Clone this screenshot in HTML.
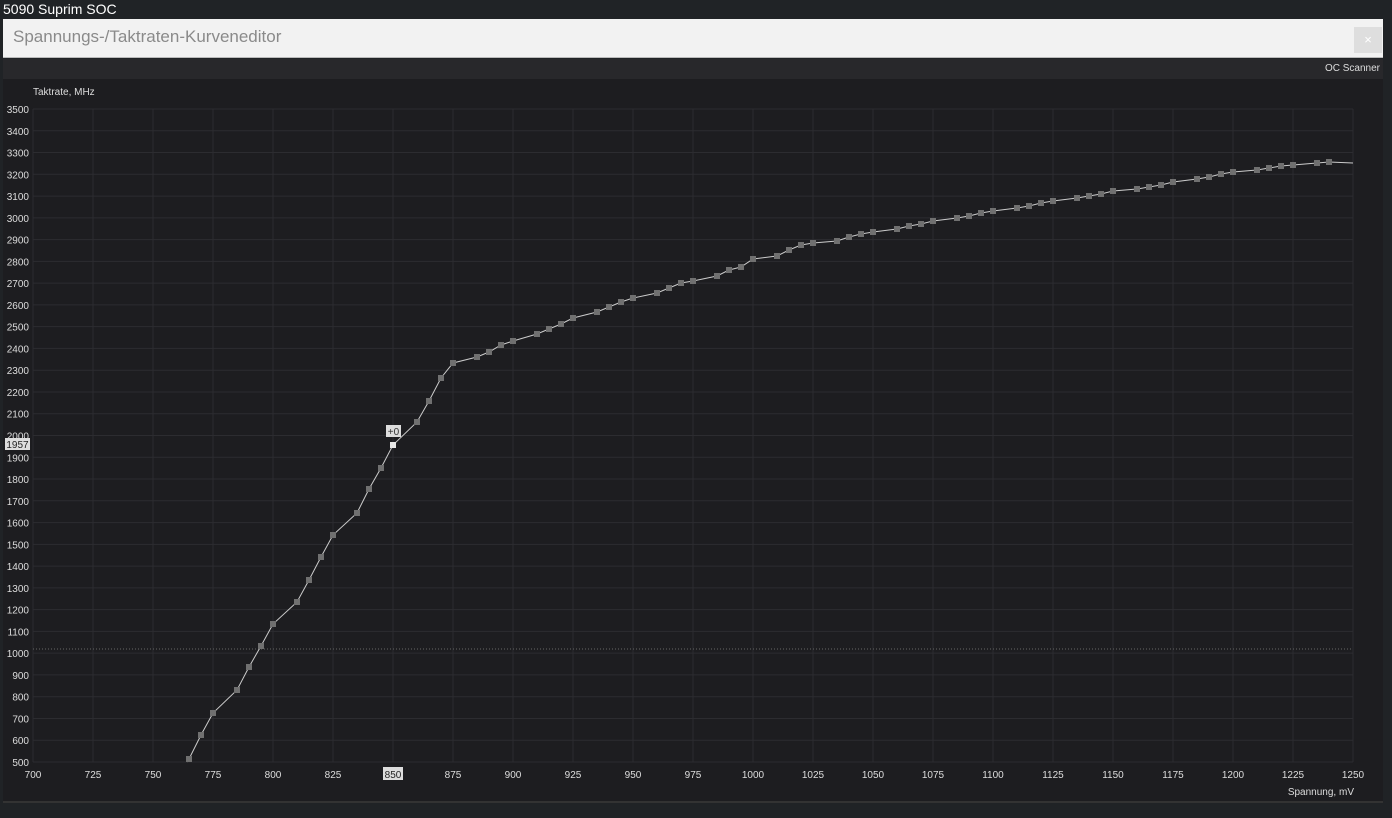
<!DOCTYPE html>
<html><head><meta charset="utf-8"><style>
html,body{margin:0;padding:0;width:1392px;height:818px;overflow:hidden;background:#202326;font-family:"Liberation Sans",sans-serif}
#top{position:absolute;left:3px;top:0;color:#fff;font-size:14px;line-height:19px}
#title{position:absolute;left:3px;top:19px;width:1380px;height:38px;background:#f2f2f2;border-bottom:1px solid #bbb}
#title span{position:absolute;left:10px;top:8px;font-size:17px;color:#8a8a8a}
#close{position:absolute;right:1px;top:8px;width:28px;height:26px;background:#dedede;color:#fff;font-size:13px;text-align:center;line-height:26px}
#hdr{position:absolute;left:3px;top:59px;width:1380px;height:20px;background:#28282b}
#hdr span{position:absolute;right:3px;top:4px;font-size:10px;color:#ddd}
#panel{position:absolute;left:3px;top:79px;width:1380px;height:722px;background:#1d1d20;border-bottom:2px solid #333}
svg{position:absolute;left:0;top:0}
</style></head><body>
<div id="top">5090 Suprim SOC</div>
<div id="title"><span>Spannungs-/Taktraten-Kurveneditor</span><div id="close">×</div></div>
<div id="hdr"><span>OC Scanner</span></div>
<div id="panel"></div>
<svg id="s" width="1392" height="818" font-family="Liberation Sans, sans-serif" font-size="10"></svg>
<script>
var s=document.getElementById('s'),h='';
h+='<text x="33" y="95" fill="#ddd">Taktrate, MHz</text>';
for(var i=0;i<=30;i++){var y=109+i*653/30;var v=3500-i*100;
h+='<line x1="33" x2="1353" y1="'+y+'" y2="'+y+'" stroke="#2c2c30"/>';
if(v!=1957)h+='<text x="29" y="'+(y+4)+'" fill="#ddd" text-anchor="end">'+v+'</text>';}
for(var j=0;j<=22;j++){var x=33+j*60;h+='<line x1="'+x+'" x2="'+x+'" y1="109" y2="762" stroke="#2c2c30"/>';
h+='<text x="'+x+'" y="778" fill="#ddd" text-anchor="middle">'+(700+j*25)+'</text>';}
h+='<line x1="33" x2="1353" y1="649" y2="649" stroke="#666" stroke-dasharray="1,2"/>';
var p=[[187,762],[189,759],[201,735],[213,713],[237,690],[249,667],[261,646],[273,624],[297,602],[309,580],[321,557],[333,535],[357,513],[369,489],[381,468],[393,445],[417,422],[429,401],[441,378],[453,363],[477,357],[489,352],[501,345],[513,341],[537,334],[549,329],[561,324],[573,318],[597,312],[609,307],[621,302],[633,298],[657,293],[669,288],[681,283],[693,281],[717,276],[729,270],[741,267],[753,259],[777,256],[789,250],[801,245],[813,243],[837,241],[849,237],[861,234],[873,232],[897,229],[909,226],[921,224],[933,221],[957,218],[969,216],[981,213],[993,211],[1017,208],[1029,206],[1041,203],[1053,201],[1077,198],[1089,196],[1101,194],[1113,191],[1137,189],[1149,187],[1161,185],[1173,182],[1197,179],[1209,177],[1221,174],[1233,172],[1257,170],[1269,168],[1281,166],[1293,165],[1317,163],[1329,162],[1353,163]];
h+='<polyline fill="none" stroke="#ccc" stroke-width="1" points="'+p.map(function(a){return a.join(',')}).join(' ')+'"/>';
for(var k=1;k<p.length-1;k++){var c=p[k][0]==393?'#e8e8e8':'#707070';h+='<rect x="'+(p[k][0]-3)+'" y="'+(p[k][1]-3)+'" width="6" height="6" fill="'+c+'"/>';}
h+='<rect x="386" y="425" width="15" height="12" fill="#ddd"/><text x="393.5" y="435" text-anchor="middle" fill="#333">+0</text>';
h+='<rect x="5" y="438" width="25" height="12" fill="#ddd"/><text x="17.5" y="448" text-anchor="middle" fill="#222">1957</text>';
h+='<rect x="383" y="767" width="20" height="13" fill="#ddd"/><text x="393" y="778" text-anchor="middle" fill="#222">850</text>';
h+='<text x="1354" y="795" fill="#ddd" text-anchor="end">Spannung, mV</text>';
s.innerHTML=h;
</script>
</body></html>
